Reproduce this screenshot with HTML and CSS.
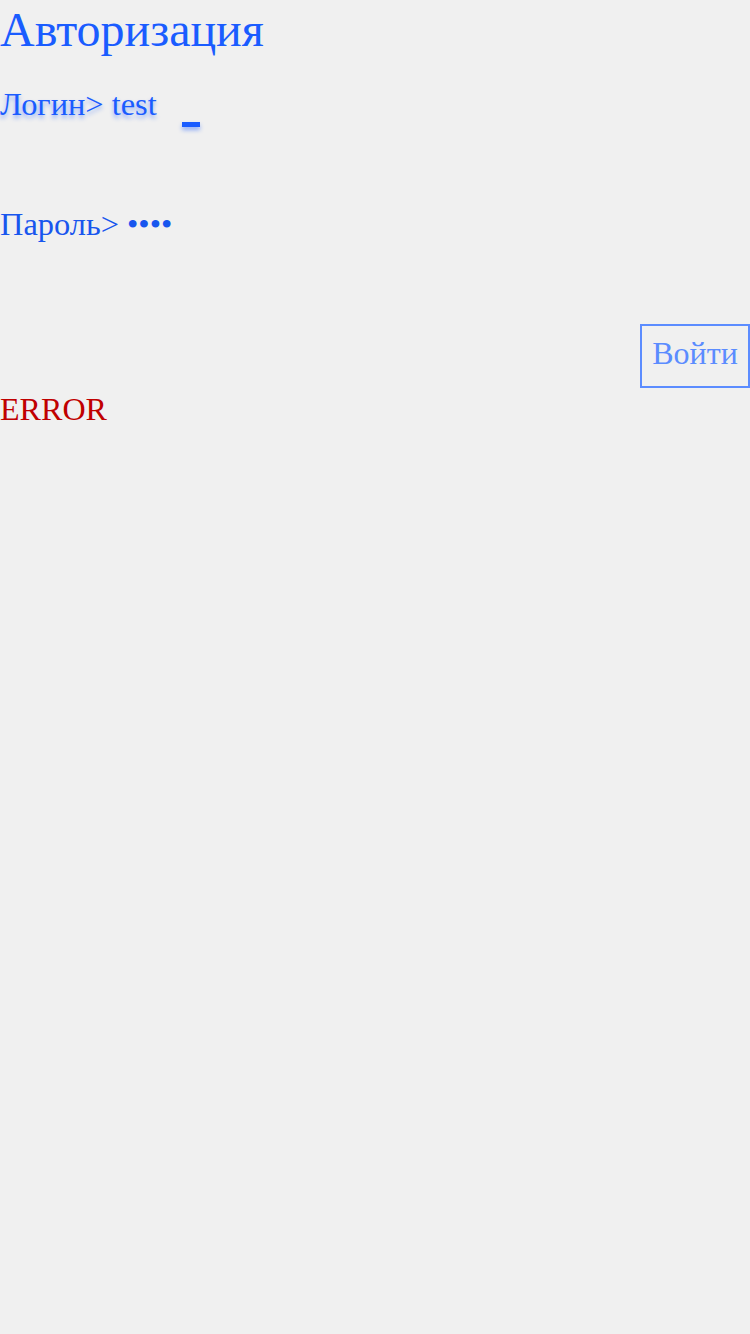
FILE: index.html
```html
<!DOCTYPE html>
<html lang="ru">
<head>
<meta charset="utf-8">
<title>Авторизация</title>
<link rel="stylesheet" href="styles.css">
</head>
<body>
<div class="page">
  <h1 class="title">Авторизация</h1>
  <div class="row login-row">
    <span class="label glow">Логин&gt; test</span>
    <span class="cursor"></span>
  </div>
  <div class="row pass-row">
    <span class="label pass">Пароль&gt; ••••</span>
  </div>
  <div class="actions">
    <button class="btn" type="button">Войти</button>
  </div>
  <div class="error">ERROR</div>
</div>
</body>
</html>
```
FILE: styles.css
```css
html, body {
  margin: 0;
  padding: 0;
  background: #f0f0f0;
}
body {
  font-family: "Liberation Serif", "Times New Roman", serif;
  color: #1a5cff;
  font-size: 32.4px;
}
.page {
  display: flex;
  flex-direction: column;
}
.title {
  margin: 0;
  font-size: 48px;
  font-weight: normal;
  line-height: 60px;
  color: #1a5cff;
}
.row {
  display: flex;
  align-items: flex-start;
}
.login-row {
  margin-top: 26px;
  height: 120px;
}
.label {
  line-height: 37px;
}
.glow {
  text-shadow: 0 3px 4px rgba(26, 92, 255, 0.45);
}
.pass {
  color: #1856ee;
}
.cursor {
  width: 18px;
  height: 5px;
  background: #1a5cff;
  margin-left: 25px;
  margin-top: 36px;
  box-shadow: 0 3px 4px rgba(26, 92, 255, 0.45);
}
.pass-row {
  height: 118px;
}
.actions {
  display: flex;
  justify-content: flex-end;
}
.btn {
  font-family: inherit;
  font-size: 32px;
  color: #5b8cff;
  background: transparent;
  border: 2px solid #5b8cff;
  width: 110px;
  height: 64px;
  padding: 0 0 5px;
  margin: 0;
}
.error {
  color: #c00000;
  font-size: 32.1px;
  line-height: 42px;
}
```
